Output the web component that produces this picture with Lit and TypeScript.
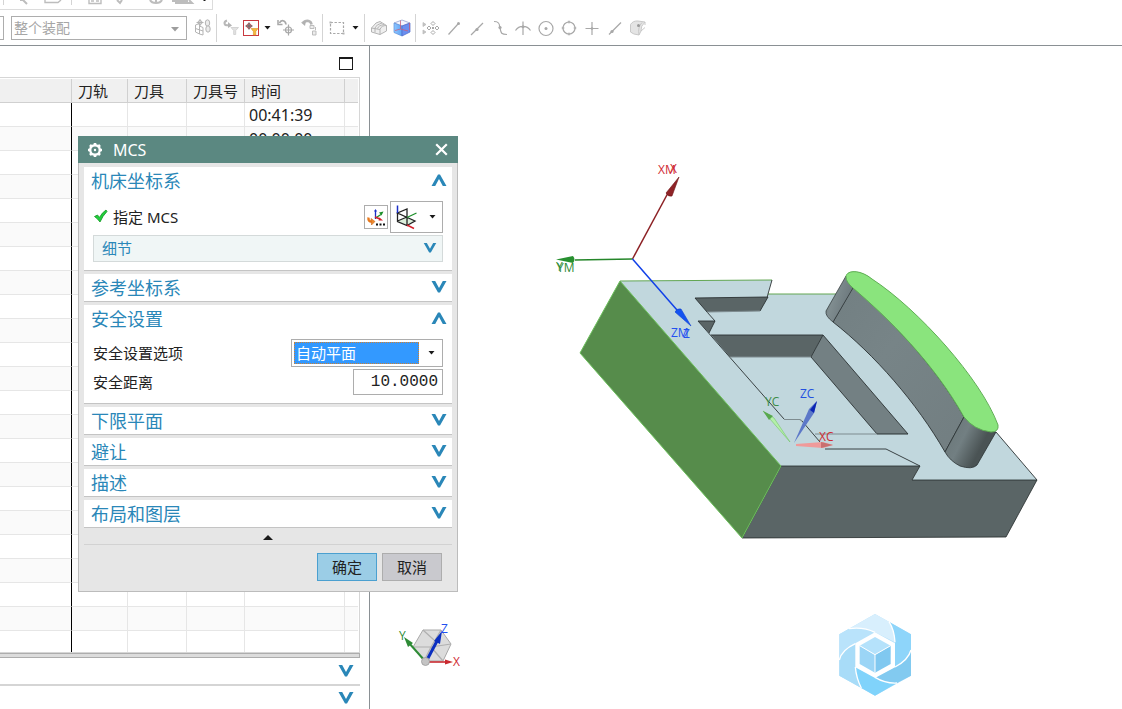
import { LitElement, html, svg, css, TemplateResult } from "lit";
import { customElement, state } from "lit/decorators.js";

/* ---------- shared glyphs ---------- */
const chevron = (up: boolean) => html`<svg class="chev" viewBox="0 0 16 12" width="16" height="12" aria-hidden="true">
  <path fill="#2a87b8" d=${up ? "M0.5 12 L7 0.5 H9 L15.5 12 H11.8 L8 5 L4.2 12 Z" : "M0.5 0 L7 11.5 H9 L15.5 0 H11.8 L8 7 L4.2 0 Z"} />
</svg>`;
const caret = html`<svg width="7" height="4" viewBox="0 0 7 4" aria-hidden="true"><path d="M0.5 0 H6.5 L3.5 3.5 Z" fill="#1a1a1a" /></svg>`;

const glyph = (body: TemplateResult) => html`<svg width="20" height="20" viewBox="0 0 20 20" fill="none" stroke="#a8a8a8" stroke-width="1.2" aria-hidden="true">${body}</svg>`;

const icons: Record<string, TemplateResult> = {
  assembly: svg`<g stroke="#b4b4b4" stroke-width="1"><path d="M2.5 7 L6.5 5.5 V16 L2.5 14 Z M6.5 8 L10 9.5 V17 L6.5 16 M2.5 10.5 L10 13 M7 1 V9 M3.5 4.5 H10.5"/><circle cx="7" cy="4.5" r="2"/><ellipse cx="14.500" cy="5" rx="2.2" ry="3.2" fill="#ececec"/><ellipse cx="15" cy="11" rx="2.2" ry="3.2" fill="#ececec"/></g>`,
  filterBack: svg`<path d="M6 2.5 C2 4 3 8.5 8 7" stroke-width="2" stroke="#b8b8b8"/><path d="M7 4 L11 7.5 L7 10 Z" fill="#b4b4b4" stroke="none"/><path d="M10 9.5 H17.500 L14.700 12.500 V16.500 H12.700 V12.500 Z" fill="#e2e2e2" stroke="#d4d4d4" stroke-width="1"/>`,
  undoPoint: svg`<path d="M3.500 5 C5 1.500 9.500 2 10 6.500" stroke-width="1.700"/><path d="M2 2 V6.500 H6.500" stroke-width="1.500"/><circle cx="12.500" cy="12" r="3"/><path d="M12.500 6.500 V17.500 M7 12 H18"/>`,
  undoTree: svg`<path d="M4 4.500 C8 1.500 12 3 12.500 6.500" stroke-width="2.600" stroke="#b4b4b4"/><path d="M2 4.500 L7 3 L6 8 Z" fill="#b0b0b0" stroke="none"/><path d="M11 7.500 H15 V10.500 H11 Z M13.500 13 H17 V17 H13.500 Z M16.500 9 V12" fill="#ececec" stroke="#bdbdbd" stroke-width="1"/>`,
  marquee: svg`<rect x="3.500" y="4.500" width="13" height="11" stroke-dasharray="2.400 1.600"/><path d="M2.500 3.500 h2 v2 h-2 Z M15.500 14.500 h2 v2 h-2 Z" fill="#b4b4b4" stroke="none"/>`,
  solidGrey: svg`<g stroke="#b4b4b4" stroke-width="1"><path d="M2.500 10 L7 5 L11 3.500 L17.500 7.500 V13 L11 16.500 L2.500 14 Z" fill="#efefef"/><path d="M2.500 10 L11 11.500 V16.500 M11 11.500 C12 8.500 14 7.500 17.500 7.500 M6 14.500 V10 C7 7.500 9 6.500 13 5 M8.500 10.500 C9.500 8 11 7.500 15 6.500"/></g>`,
  pattern: svg`<path d="M2 4.500 L5 6.500 L2 8.500 Z M2 12 L5 14 L2 16 Z" fill="#c4c4c4" stroke="#bdbdbd" stroke-width=".8"/><path d="M12 3.500 l2 2 -2 2 -2 -2 Z M8 8 l2 2 -2 2 -2 -2 Z M16 8 l2 2 -2 2 -2 -2 Z M12 12.500 l2 2 -2 2 -2 -2 Z" stroke-width="1"/><path d="M11 9 h2 v2 h-2 Z" fill="#a8a8a8" stroke="none"/>`,
  lineEnd: svg`<path d="M4.500 16.500 L14 6"/><circle cx="14.500" cy="5.500" r="1.500" fill="#a8a8a8" stroke="none"/>`,
  lineMid: svg`<path d="M4 17 L16 5"/><circle cx="10" cy="11.500" r="1.600" fill="#a8a8a8" stroke="none"/>`,
  sCurve: svg`<path d="M4 3.500 C11 3.500 9 8 10 10 C11 15 11 16.500 17 16.500"/><circle cx="10" cy="9.500" r="1.600" fill="#a8a8a8" stroke="none"/>`,
  intersect: svg`<path d="M2.500 12.500 C6 7 14 7 17.500 12.500 M10 3.500 V17"/><circle cx="10" cy="8.700" r="1.500" fill="#a8a8a8" stroke="none"/>`,
  center: svg`<circle cx="10" cy="10.500" r="7"/><circle cx="10" cy="10.500" r="1.500" fill="#a8a8a8" stroke="none"/>`,
  quadrant: svg`<circle cx="10" cy="10" r="6"/><path d="M8.800 2.800h2.400v2.400h-2.400Z M8.800 14.800h2.400v2.400h-2.400Z M2.800 8.800h2.400v2.400H2.800Z M14.800 8.800h2.400v2.400h-2.400Z" fill="#b4b4b4" stroke="none"/>`,
  cross: svg`<path d="M3.500 10.500 H16.500 M10 4 V17"/><circle cx="10" cy="10.500" r="1.300" fill="#a8a8a8" stroke="none"/>`,
  onCurve: svg`<path d="M4 16.500 L16 4.500"/><circle cx="7" cy="13.500" r="1.600" fill="#a8a8a8" stroke="none"/>`,
  onFace: svg`<g stroke="#c4c4c4" stroke-width=".9"><path d="M2.500 6.500 Q5 2.500 10 3 L17 4 Q12.500 8 13 13 L11 17 Q5 16.500 2.500 14 Z" fill="#e4e4e4"/><path d="M13 13 L17 9.500 M11 17 Q9.500 9 14 4.500 M17 4 V7" /></g><circle cx="10.500" cy="7.500" r="1.500" fill="#999" stroke="none"/>`,
};

const solidBlue = html`<svg width="20" height="20" viewBox="0 0 20 20" aria-hidden="true">
  <defs><linearGradient id="cubeFront" x1="0" x2="1"><stop offset="0" stop-color="#8fc6ff" /><stop offset="1" stop-color="#5fa4f6" /></linearGradient></defs>
  <path d="M2 5 L10 2 L18 5 L10 8 Z" fill="#f4f6ff" stroke="#8a97c8" stroke-width=".7" />
  <path d="M2 5 L10 8 V18 L2 14.500 Z" fill="url(#cubeFront)" stroke="#5c8fd8" stroke-width=".7" />
  <path d="M10 8 L18 5 V14 L10 18 Z" fill="#6a8ff0" stroke="#4c68c8" stroke-width=".7" />
  <path d="M8.500 2.500 V11 L16 13 M8.500 11 L3 12.500 M17.500 5 V12" stroke="#c8607c" stroke-width=".8" fill="none" />
</svg>`;

const snapFilter = html`<svg width="16" height="16" viewBox="0 0 16 16" aria-hidden="true">
  <circle cx="5" cy="5" r="2.2" fill="none" stroke="#b8383f" /><path d="M5 1.500 V8.500 M1.500 5 H8.500" stroke="#4a4040" />
  <path d="M7 7.500 H14 L11.800 10.400 V14 H9.400 V10.400 Z" fill="#f5b83d" stroke="#d9962a" stroke-width=".6" />
</svg>`;

/* ---------- selection toolbar ---------- */
@customElement("selection-toolbar")
class SelectionToolbar extends LitElement {
  static styles = css`
    :host { display: block; background: #fff; border-bottom: 1px solid #8a9094; }
    .upper { display: flex; width: 212px; height: 9px; overflow: hidden; border: solid #dcdcdc; border-width: 0 1px 1px 0; }
    .lower { display: flex; align-items: center; height: 35px; }
    .stub { width: 3px; height: 22px; border: solid #adadad; border-width: 1px 1px 1px 0; margin-right: 7px; }
    .scope { position: relative; display: flex; width: 176px; margin-right: 4px; }
    .scope select { appearance: none; width: 100%; height: 24px; padding: 0 2px; border: 1px solid #adadad; border-radius: 0; background: #fff; color: #a6a6a6; font: 14px "Noto Sans", "Noto Sans CJK SC", sans-serif; opacity: 1; }
    .scope svg { position: absolute; right: 8px; top: 11px; }
    button { display: grid; place-items: center; width: 23px; height: 26px; padding: 0; border: 0; background: none; }
    .drop { width: 14px; }
    .active { width: 16px; height: 16px; margin: 0 1px; border: 1px solid #c9383f; }
    .sep { width: 1px; height: 28px; margin: 0 2px; background: #d4d4d4; }
    .snaps { display: flex; padding-left: 1px; }
  `;
  private tool(name: string, label: string) {
    return html`<button aria-label=${label}>${glyph(icons[name])}</button>`;
  }
  render() {
    return html`
      <div class="upper">
        <svg width="212" height="9" viewBox="0 0 212 9" fill="none" stroke="#bdbdbd" stroke-width="1.400" aria-hidden="true">
          <path d="M3.500 0 V5 M71.500 0 V5" stroke="#d4d4d4" stroke-width="1" />
          <path d="M20 0 H24 M23 0 L27 4" stroke-width="2" />
          <path d="M45 0 V2.500 H58 L61 0 M47 -1 H57" />
          <path d="M89 0 V3.500 H101 V0 M91 1 H94 M96 1 H99" />
          <path d="M117 0 L120 3 L122 0" stroke-width="2" />
          <path d="M150 0 C152 4 160 4 162 0 M156 0 V2" stroke-width="2" />
          <path d="M172 1 H188 M175 3 H192 L189 0" stroke-width="2" />
          <path d="M203.500 0 H205.500" stroke="#1a1a1a" stroke-width="2" />
        </svg>
      </div>
      <div class="lower">
        <span class="stub"></span>
        <label class="scope">
          <select disabled aria-label="选择范围"><option>整个装配</option></select>
          <svg width="8" height="5" viewBox="0 0 8 5"><path d="M0 0 H8 L4 4.500 Z" fill="#9d9d9d" /></svg>
        </label>
        ${this.tool("assembly", "装配")}<span class="sep"></span>
        ${this.tool("filterBack", "重置过滤器")}
        <button class="active" aria-label="点过滤器">${snapFilter}</button>
        <button class="drop" aria-label="更多过滤器">${caret}</button>
        ${this.tool("undoPoint", "重置点")}${this.tool("undoTree", "重置树")}<span class="sep"></span>
        ${this.tool("marquee", "矩形选择")}<button class="drop" aria-label="更多选择">${caret}</button><span class="sep"></span>
        ${this.tool("solidGrey", "体")}<button aria-label="着色">${solidBlue}</button><span class="sep"></span>
        <div class="snaps">
          ${this.tool("pattern", "捕捉点")}${this.tool("lineEnd", "端点")}${this.tool("lineMid", "中点")}${this.tool("sCurve", "控制点")}
          ${this.tool("intersect", "交点")}${this.tool("center", "圆心")}${this.tool("quadrant", "象限点")}${this.tool("cross", "现有点")}
          ${this.tool("onCurve", "曲线上的点")}${this.tool("onFace", "面上的点")}
        </div>
      </div>`;
  }
}

/* ---------- operation navigator ---------- */
@customElement("operation-navigator")
class OperationNavigator extends LitElement {
  static styles = css`
    :host { display: flex; flex-direction: column; box-sizing: border-box; width: 370px; flex: none; padding-right: 9px; border-right: 1px solid #8a9094; background: #fff; color: #222; font: 15px "Noto Sans", "Noto Sans CJK SC", sans-serif; overflow: hidden; }
    .bar { display: flex; justify-content: flex-end; align-items: center; flex: none; height: 31px; padding: 4px 7px 0 0; box-sizing: border-box; }
    .max { width: 14px; height: 13px; padding: 0; border: 1px solid #1a1a1a; border-top-width: 2px; background: #fff; }
    .frame { flex: 1; min-height: 0; overflow: hidden; padding: 1px 1px 1px 0; border: solid #d6d6d6; border-width: 1px 1px 1px 0; }
    table { width: 100%; table-layout: fixed; border-collapse: separate; border-spacing: 0; }
    th, td { box-sizing: border-box; height: 24px; padding: 2px 0 0 4px; border-right: 1px solid #e6e6e6; border-bottom: 1px solid #e6e6e6; text-align: left; font-weight: 400; line-height: 21px; white-space: nowrap; }
    td { font-size: 16px; }
    th { padding-left: 6px; background: #f0f0f0; border-color: #d0d0d0; }
    tbody tr:nth-child(even) { background: #fafafa; }
    td:first-child { border-right-color: #000; }
    th:last-child, td:last-child { border-right: 0; }
    .name { width: 72px; } .path { width: 56px; } .tool { width: 59px; } .num { width: 58px; } .time { width: 100px; }
    .split { flex: none; height: 3px; border: 1px solid #adadad; border-left: 0; background: #dcdcdc; }
    .fold { display: flex; align-items: center; justify-content: flex-end; flex: none; width: 100%; height: 26px; padding: 0 6px 0 0; border: 0; background: none; }
    .fold:last-child { height: 25px; border-top: 2px solid #d5d5d5; }
    .chev { display: block; }
  `;
  private times = ["00:41:39", "00:00:00"];
  render() {
    return html`
      <div class="bar"><button class="max" aria-label="最大化"></button></div>
      <div class="frame">
        <table>
          <colgroup><col class="name" /><col class="path" /><col class="tool" /><col class="num" /><col class="time" /><col /></colgroup>
          <thead><tr><th></th><th>刀轨</th><th>刀具</th><th>刀具号</th><th>时间</th><th></th></tr></thead>
          <tbody>
            ${Array.from({ length: 23 }, (_, i) => html`<tr><td></td><td></td><td></td><td></td><td>${this.times[i] ?? ""}</td><td></td></tr>`)}
          </tbody>
        </table>
      </div>
      <div class="split"></div>
      <button class="fold" aria-label="相关性">${chevron(false)}</button>
      <button class="fold" aria-label="细节">${chevron(false)}</button>`;
  }
}

/* ---------- MCS dialog ---------- */
@customElement("mcs-dialog")
class McsDialog extends LitElement {
  static styles = css`
    :host { display: block; box-sizing: border-box; width: 380px; background: #e6e6e6; border: 1px solid #bcbcbc; border-top: 0; color: #222; font: 15px "Noto Sans", "Noto Sans CJK SC", sans-serif; }
    button, select, input { font: inherit; color: inherit; border-radius: 0; }
    button { display: flex; align-items: center; justify-content: center; box-sizing: border-box; padding: 0; border: 0; background: none; }
    .title { display: flex; align-items: center; height: 27px; margin: 0 -1px; padding: 0 10px 0 9px; background: #5b8881; color: #fff; font-size: 16px; }
    .title span { flex: 1; padding-left: 10px; }
    .groups { display: flex; flex-direction: column; gap: 3px; padding: 4px 5px 0; }
    section { background: #fff; border-bottom: 1px solid #c4c4c4; }
    .head { justify-content: space-between; width: 100%; height: 27px; padding: 0 5px 0 7px; color: #2a87b8; font-size: 18px; line-height: 26px; }
    .chev { display: block; margin-bottom: 2px; }
    .body { display: flex; flex-direction: column; gap: 2px; padding: 7px 9px 8px; }
    .row { display: flex; align-items: center; }
    .row .grow { flex: 1; display: flex; align-items: center; gap: 5px; padding-bottom: 2px; }
    .pick { width: 24px; height: 24px; margin-right: 2px; border: 1px solid #adadad; background: #fff; }
    .csys { width: 53px; height: 32px; padding: 0 6px 0 4px; justify-content: space-between; border: 1px solid #adadad; background: #fff; }
    .detail { justify-content: space-between; height: 27px; padding: 0 5px 2px 8px; border: 1px solid #d4dada; background: #f0f6f6; color: #2a87b8; }
    .detail .chev { width: 14px; height: 10px; margin: 0; }
    .combo { display: flex; align-items: center; box-sizing: border-box; width: 152px; height: 28px; padding: 0 7px 0 2px; gap: 9px; border: 1px solid #adadad; background: #fff; }
    .combo select { appearance: none; flex: 1; min-width: 0; height: 22px; padding: 0 1px; border: 1px dotted #d08030; background: #3399ff; color: #fff; outline: 0; }
    .num { box-sizing: border-box; width: 90px; height: 26px; padding: 0 4px; border: 1px solid #adadad; background: #fff; text-align: right; font: 16px "Liberation Mono", monospace; }
    .collapse { width: 100%; height: 16px; padding-top: 3px; }
    .foot { display: flex; justify-content: flex-end; gap: 5px; margin: 0 5px; padding: 8px 10px 10px; border-top: 1px solid #d2d2d2; }
    .foot button { width: 60px; height: 28px; padding-bottom: 2px; border: 1px solid #adadad; background: #c9c9ce; }
    .foot .ok { border-color: #4ba0d0; background: #9bcde6; }
  `;
  private head(label: string, open = false) {
    return html`<button class="head" aria-expanded=${open ? "true" : "false"}><span>${label}</span>${chevron(open)}</button>`;
  }
  render() {
    return html`
      <div class="title">
        <svg width="16" height="16" viewBox="0 0 16 16" fill="none" stroke="#fff" aria-hidden="true">
          <circle cx="8" cy="8" r="4.800" stroke-width="2.400" /><circle cx="8" cy="8" r="1.200" fill="#fff" stroke="none" />
          <path d="M8 1 V3 M8 13 V15 M1 8 H3 M13 8 H15 M3 3 L4.500 4.500 M11.500 11.500 L13 13 M3 13 L4.500 11.500 M11.500 4.500 L13 3" stroke-width="2.600" />
        </svg>
        <span>MCS</span>
        <button aria-label="关闭"><svg width="13" height="13" viewBox="0 0 13 13"><path d="M1.200 1.200 L11.800 11.800 M11.800 1.200 L1.200 11.800" stroke="#fff" stroke-width="2.200" /></svg></button>
      </div>
      <div class="groups">
        <section>
          ${this.head("机床坐标系", true)}
          <div class="body">
            <div class="row">
              <span class="grow">
                <svg width="15" height="14" viewBox="0 0 15 14" aria-hidden="true"><path d="M1.500 7.500 L4.500 6 L6.500 8.400 Q9 3.500 13 1 L14 2.500 Q9.500 7 7 13 Q4.500 9.500 1.500 7.500 Z" fill="#1fce3c" stroke="#10941f" stroke-width=".8" /></svg>
                指定 MCS
              </span>
              <button class="pick" aria-label="坐标系对话框">
                <svg width="20" height="20" viewBox="0 0 20 20" fill="none" aria-hidden="true">
                  <path d="M9.500 12 V3" stroke="#1a2fc8" stroke-width="1.300" /><path d="M8 4.500 L9.500 2 L11 4.500 Z" fill="#1a2fc8" />
                  <path d="M9.500 11 L15 7.500" stroke="#1c8f2a" stroke-width="1.300" /><path d="M13 5.500 L17.500 4.500 L15.500 8.500 Z" fill="#1c8f2a" />
                  <path d="M9 10 L14 12" stroke="#d4202a" stroke-width="1.600" /><path d="M13.500 10.500 L17 13.500 L12.500 13.500 Z" fill="#d4202a" />
                  <path d="M2.500 10.500 Q2 15 6 14.500" stroke="#e8791c" stroke-width="2.400" /><path d="M5 11.500 L9 14.500 L5.500 18 Z" fill="#f08a2c" stroke="#c8641a" stroke-width=".6" />
                  <path d="M10 17.500 h2 M13.500 17.500 h2 M17 17.500 h2" stroke="#111" stroke-width="2" />
                </svg>
              </button>
              <button class="csys" aria-label="坐标系类型">
                <svg width="24" height="26" viewBox="0 0 24 26" fill="none" stroke="#222" stroke-width="1.300" aria-hidden="true">
                  <path d="M12 13 L20 17 L12 21 L2.500 17 Z" fill="#dcefdc" stroke="none" />
                  <path d="M2.500 9 V17.500 L12 21.500 V5 L2.500 9 L20 17 L12 21.500 M2.500 17 L12 13" />
                  <path d="M2.500 1.500 V9" stroke="#1a2fc8" stroke-width="1.500" /><path d="M12 13.500 L21.500 9" stroke="#1c8f2a" stroke-width="1.300" /><path d="M12 21 L19 24.500" stroke="#d4202a" stroke-width="1.500" />
                </svg>${caret}
              </button>
            </div>
            <button class="detail" aria-expanded="false"><span>细节</span>${chevron(false)}</button>
          </div>
        </section>
        <section>${this.head("参考坐标系")}</section>
        <section>
          ${this.head("安全设置", true)}
          <div class="body">
            <div class="row">
              <label class="grow" for="mode">安全设置选项</label>
              <span class="combo"><select id="mode"><option>自动平面</option></select>${caret}</span>
            </div>
            <div class="row">
              <label class="grow" for="distance">安全距离</label>
              <input class="num" id="distance" type="text" value="10.0000" />
            </div>
          </div>
        </section>
        <section>${this.head("下限平面")}</section>
        <section>${this.head("避让")}</section>
        <section>${this.head("描述")}</section>
        <section>${this.head("布局和图层")}</section>
      </div>
      <button class="collapse" aria-label="收起"><svg width="10" height="5" viewBox="0 0 10 5"><path d="M5 0 L10 5 H0 Z" fill="#1a1a1a" /></svg></button>
      <div class="foot"><button class="ok">确定</button><button>取消</button></div>`;
  }
}

/* ---------- graphics window ---------- */
@customElement("model-view")
class ModelView extends LitElement {
  static styles = css`
    :host { display: block; flex: 1; min-width: 0; background: #fff; }
    svg { display: block; width: 100%; height: 100%; }
    text { font: 12px "Open Sans", "Noto Sans", sans-serif; }
  `;
  render() {
    return html`<svg viewBox="370 46 752 663" preserveAspectRatio="xMidYMid meet" role="img" aria-label="零件模型">
      <defs>
        <linearGradient id="wall" x1="0" y1="0" x2="1" y2="1"><stop offset="0" stop-color="#727f82" /><stop offset=".4" stop-color="#778487" /><stop offset="1" stop-color="#727e81" /></linearGradient>
        <linearGradient id="capA" x1="0" y1="0" x2="1" y2=".5"><stop offset="0" stop-color="#626d6f" /><stop offset=".4" stop-color="#808d90" /><stop offset="1" stop-color="#69757a" /></linearGradient>
        <linearGradient id="capB" x1="0" y1="0" x2="1" y2=".5"><stop offset=".1" stop-color="#6a7678" /><stop offset=".45" stop-color="#727f82" /><stop offset=".8" stop-color="#4a5354" /></linearGradient>
      </defs>

      <!-- block -->
      <path d="M620 281 L772 280 L768 294 L840 294 L996 432 L1037 480 H912 L920 466 H781 Z" fill="#c1d7dd" />
      <path d="M781 466 H920 L912 480 H1037 L1006 537 L742 538 Z" fill="#5a6566" stroke="#252b2b" stroke-width=".8" />
      <path d="M620 281 L781 466 L742 538 L580 353 Z" fill="#568c4b" stroke="#6cc05c" stroke-width="1" />
      <path d="M620 281 L772 280 M768 294 L836 294" fill="none" stroke="#62a653" />
      <path d="M772 280 L768 294 L767 298 M996 432 L1037 480" fill="none" stroke="#2b3233" stroke-width=".9" />

      <!-- notches and pocket -->
      <path d="M695 298 L768 297 L760 311 L707 312 Z M698 321 H715 L709 333 Z M711 335 H823 L811 357 H730 Z" fill="#5a6566" />
      <path d="M823 335 L908 434 H877 L811 357 Z" fill="#738083" />
      <g fill="none" stroke="#2b3233" stroke-width=".9">
        <path d="M707 312 L695 298 L768 297 L760 311 M707 312 L715 321 L709 333 M698 321 H715 M698 321 L784 419" />
        <path d="M711 335 H823 L908 434 M823 335 L811 357 L877 434 M825 449 H886 L920 466 M802 421 L820 442" />
      </g>
      <path d="M707 312 L760 311 M730 357 H811 M784 419.500 H800 L802 421 M815 434 H877" fill="none" stroke="#7e8c90" stroke-width="1.200" />
      <path d="M877 434 H908" stroke="#2b3233" />

      <!-- curved boss -->
      <path d="M853 287 C888 318 934 363 964 417 L945 452 C917 403 874 354 833 322 Z" fill="url(#wall)" stroke="#2b3233" stroke-width=".9" />
      <path d="M846 276 Q848 283 853 288 L833 322 Q825 316 826 311 Z" fill="url(#capA)" stroke="#2b3233" stroke-width=".7" />
      <path d="M964 417 Q976 431 996 432 L977 465 Q972 470 960 466 Q950 461 945 452 Z" fill="url(#capB)" stroke="#2b3233" stroke-width=".8" />
      <path d="M846 277 C846 270 860 269 872 279 C918 309 981 379 998 425 Q999 432 991 432 Q974 430 964 417 C934 363 888 318 853 288 Q846 282 846 277 Z" fill="#8ae47d" stroke="#5fae54" stroke-width="1" />

      <!-- machine coordinate system -->
      <path d="M632.500 259 L668 193" stroke="#8c2024" stroke-width="1.500" /><path d="M679 177 L666 193 Q668 197 672 196 Z" fill="#8f2327" stroke="#6f1518" stroke-width=".6" />
      <path d="M632.500 259 L575 260" stroke="#25862a" stroke-width="1.500" /><path d="M556 259.500 L573 256 Q576 259.500 573 263 Z" fill="#279030" />
      <path d="M632.500 259 L677 310" stroke="#1040e8" stroke-width="1.500" /><path d="M691 326 L675 312 Q677 308 681 309 Z" fill="#1453f0" stroke="#1040d0" stroke-width=".6" />
      <g fill="#d02c33"><text x="658" y="174">XM</text><text x="670" y="173">X</text></g>
      <g fill="#2e8b36"><text x="557" y="272">YM</text><text x="556" y="271">Y</text></g>
      <g fill="#2350f0"><text x="671" y="337">ZM</text><text x="683" y="338">Z</text></g>

      <!-- work coordinate system -->
      <path d="M794 443 L809 409 L817 401 L814 413 Z" fill="#5c78c8" /><path d="M817 401 L810 410 L814 413 Z" fill="#0b25b4" />
      <path d="M790 442 L763 411 L774 418 Z" fill="#b4f0a8" stroke="#74c468" stroke-width=".6" /><path d="M763 411 L773 416 L769 420 Z" fill="#58a84e" />
      <path d="M796 444 L823 442 L833 445 L823 448 L796 446 Z" fill="#f09a9a" /><path d="M821 442 L833 445 L821 448 Z" fill="#c87070" />
      <text x="800" y="398" fill="#2350e0">ZC</text><text x="765" y="406" fill="#3d8d48">YC</text><text x="819" y="441" fill="#d02c33">XC</text>

      <!-- view triad -->
      <path d="M423 630 L441 630 L451 644 L443 661 H424 L413 647 Z" fill="#dcdcdc" stroke="#a9a9a9" />
      <path d="M413 647 H431 L441 630 M431 647 L451 644 M431 647 L443 661 M431 647 L424 661 M423 630 L434 640" fill="none" stroke="#b0b0b0" stroke-width="1.200" />
      <path d="M425 661 L409 643" stroke="#2e8b36" stroke-width="2" /><path d="M404 637 L413 643 L408 647 Z" fill="#2e8b36" />
      <path d="M427 660 L437 641" stroke="#0b2fc0" stroke-width="3" /><path d="M442 631 L440 644 L434 641 Z" fill="#0b2fc0" />
      <path d="M427 662 H446" stroke="#c92a30" stroke-width="1.600" /><path d="M445 659.500 L453 662 L445 664.500 Z" fill="#c92a30" />
      <circle cx="425.500" cy="661.500" r="4" fill="#c4c4c4" stroke="#9a9a9a" stroke-width=".8" />
      <text x="399" y="640" fill="#2e8b36">Y</text><text x="441" y="633" fill="#2350f0">Z</text><text x="453" y="666" fill="#d02c33">X</text>

      <!-- watermark -->
      <g transform="translate(825 605) scale(.33333)">
        <path d="M150 27 L258 88 V212 L150 272 L43 212 V88 Z" fill="#b5e0fa" />
        <path d="M72 71 L150 27 L192 50 Q208 75 210 112 L150 82 Q115 65 72 71 Z" fill="#d8effd" />
        <path d="M192 50 L258 88 V135 Q250 165 210 186 V112 Q208 75 192 50 Z" fill="#8ed5fa" />
        <path d="M258 135 V212 L216 234 Q182 236 150 217 L210 186 Q250 165 258 135 Z" fill="#82caf0" />
        <path d="M216 234 L150 272 L109 249 Q94 220 91 186 L150 217 Q182 236 216 234 Z" fill="#80d3fb" />
        <path d="M109 249 L43 212 V165 Q50 135 91 118 V186 Q94 220 109 249 Z" fill="#a8dcf8" />
        <path d="M43 165 V88 L72 71 Q115 65 150 82 L91 118 Q50 135 43 165 Z" fill="#b9e3fb" />
        <path d="M192 50 Q208 75 210 112 M258 135 Q250 165 210 186 M216 234 Q182 236 150 217 M109 249 Q94 220 91 186 M43 165 Q50 135 91 116 M72 71 Q115 65 150 82" fill="none" stroke="#fff" stroke-width="4" />
        <path d="M150 82 L210 115 V187 L150 219 L91 187 V115 Z" fill="#fff" />
        <path d="M150 96 L197 122 L150 149 L104 122 Z" fill="#b5e2fb" /><path d="M104 122 L150 149 V203 L104 177 Z" fill="#9bd5f6" /><path d="M197 122 L150 149 V203 L197 177 Z" fill="#80c8f0" />
        <path d="M104 122 L150 149 L197 122 M150 149 V203" fill="none" stroke="#fff" stroke-width="3" />
      </g>
    </svg>`;
  }
}

@customElement("app-root")
class AppRoot extends LitElement {
  @state() private dialogOpen = true;
  static styles = css`
    :host { display: flex; flex-direction: column; position: relative; height: 100vh; overflow: hidden; background: #fff; }
    .work { display: flex; flex: 1; min-height: 0; }
    .floating { position: absolute; left: 78px; top: 136px; }
  `;
  render() {
    return html`
      <selection-toolbar></selection-toolbar>
      <div class="work"><operation-navigator></operation-navigator><model-view></model-view></div>
      ${this.dialogOpen ? html`<mcs-dialog class="floating"></mcs-dialog>` : ""}`;
  }
}
